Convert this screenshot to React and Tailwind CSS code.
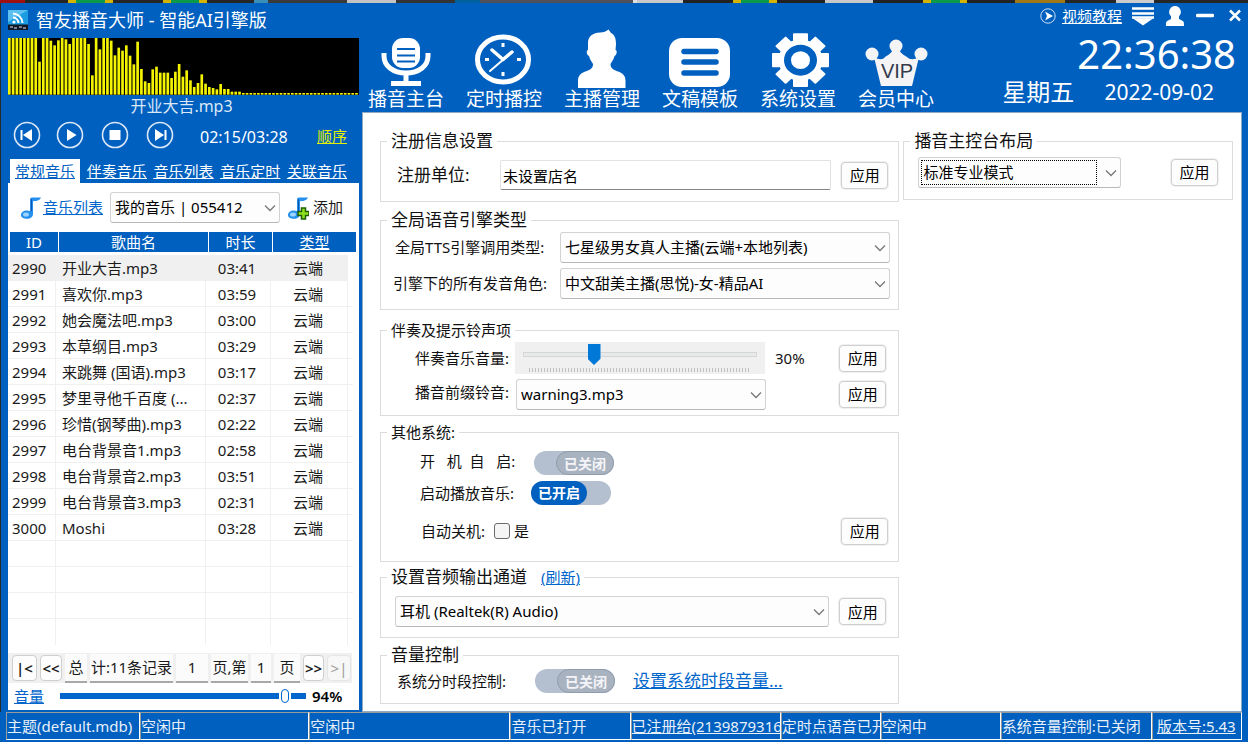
import { useState } from 'react'

// colours of the desktop strip that shows above the window
const strip = [
  [25, '#a01010'], [43, '#262626'], [8, '#d4b400'], [29, '#0a9a4a'], [8, '#d4b400'], [50, '#262626'],
  [8, '#d4b400'], [28, '#0a9a4a'], [8, '#d4b400'], [47, '#262626'], [14, '#3a8fb8'], [79, '#3a3a3a'],
  [49, '#c4c4c4'], [59, '#333333'], [25, '#0060a0'], [153, '#50505a'], [4, '#e0e0e0'], [46, '#c8c8c8'],
  [50, '#222222'], [8, '#d4b400'], [28, '#0a9a4a'], [8, '#d4b400'], [48, '#222222'], [48, '#c8c8c8'],
  [50, '#222222'], [8, '#d4b400'], [29, '#0a9a4a'], [7, '#d4b400'], [48, '#222222'], [50, '#a07818'],
  [51, '#262626'], [38, '#cccccc'], [94, '#262626'],
]

const bars = [
  170, 170, 170, 170, 170, 170, 170, 170, 99, 170, 170, 162, 148, 163, 170, 166, 152, 170, 170, 170,
  170, 152, 58, 170, 136, 170, 170, 162, 118, 141, 132, 148, 117, 91, 159, 77, 40, 35, 76, 84,
  66, 66, 66, 50, 69, 92, 54, 73, 43, 23, 35, 61, 33, 23, 20, 16, 32, 17, 17, 9,
  9, 9, ...Array(31).fill(5),
]

const songs = [
  ['2990', '开业大吉.mp3', '03:41'],
  ['2991', '喜欢你.mp3', '03:59'],
  ['2992', '她会魔法吧.mp3', '03:00'],
  ['2993', '本草纲目.mp3', '03:29'],
  ['2994', '来跳舞 (国语).mp3', '03:17'],
  ['2995', '梦里寻他千百度 (...', '02:37'],
  ['2996', '珍惜(钢琴曲).mp3', '02:22'],
  ['2997', '电台背景音1.mp3', '02:58'],
  ['2998', '电台背景音2.mp3', '03:51'],
  ['2999', '电台背景音3.mp3', '02:31'],
  ['3000', 'Moshi', '03:28'],
]

function Logo() {
  return (
    <svg viewBox="0 0 20 20" className="w-5 h-5 shrink-0">
      <rect width="20" height="20" fill="#1b9be0" />
      <path d="M0 0h20L0 12z" fill="#5cc0f0" />
      <circle cx="6" cy="12" r="1.6" fill="#fff" />
      <path d="M5 7.500a6 6 0 0 1 5.500 5.500M5 3.500a10 10 0 0 1 9.500 9.500" fill="none" stroke="#fff" strokeWidth="2" />
      <rect y="14.500" width="20" height="5.500" fill="#111827" />
      <path d="M2 17h3M6 18h3M11 17h3M15 18h3" stroke="#9ca3af" strokeWidth="1.500" />
    </svg>
  )
}

function Note({ plus }) {
  return (
    <svg viewBox="0 0 22 24" className="w-[22px] h-6 shrink-0">
      <path
        d="M10 3.500C10 2 11 1.500 13 1.500h8c-1 2.500-3 3.500-8 3.700V18c0 3-2.500 4.800-6 4.800S1 21.500 1 19s2.500-4.500 6-4.500c1 0 2 .2 3 .6z"
        fill="#2590ee"
      />
      <ellipse cx="6" cy="18.500" rx="3" ry="2" fill="#9bd4ff" />
      <path d="M11.500 3.200v12" stroke="#0a55b0" strokeWidth="1" />
      {plus && (
        <path d="M14.500 12h4v3.500H22v4h-3.500V23h-4v-3.500H11v-4h3.500z" fill="#8fe01c" stroke="#1e5c06" strokeWidth="1.500" />
      )}
    </svg>
  )
}

function PlayerButton({ label, children }) {
  return (
    <button aria-label={label} className="w-7 h-7">
      <svg viewBox="0 0 28 28" className="w-7 h-7">
        <circle cx="14" cy="14" r="12.500" fill="none" stroke="#dbe8f6" strokeWidth="1.600" />
        <g fill="#fff">{children}</g>
      </svg>
    </button>
  )
}

function Select({ label, value, focus, id, className }) {
  return (
    <div className={`relative ${className}`}>
      <select
        id={id}
        aria-label={label}
        className="block w-full h-[31px] appearance-none rounded-[3px] border border-[#d2d2d2] border-b-[#b8b8b8] bg-[#fdfdfd] pl-1 pr-7 text-[15px] text-black outline-none"
      >
        <option>{value}</option>
      </select>
      {focus && <span className="pointer-events-none absolute top-[3px] bottom-[3px] left-[3px] right-6 border border-dotted border-black" />}
      <svg viewBox="0 0 12 8" className="pointer-events-none absolute right-1 top-3 w-3 h-2">
        <path d="M1 1.500l5 5 5-5" fill="none" stroke="#777" strokeWidth="1.300" />
      </svg>
    </div>
  )
}

function Apply() {
  return (
    <button className="shrink-0 w-[47px] h-[27px] rounded border border-[#cfcfcf] bg-[#fdfdfd] text-[15px] leading-5 text-black ring-1 ring-[#f0f0f0]">
      应用
    </button>
  )
}

function Toggle({ label, defaultOn }) {
  const [on, setOn] = useState(!!defaultOn)
  return (
    <button
      role="switch"
      aria-checked={on}
      aria-label={label}
      onClick={() => setOn(!on)}
      className={`flex h-6 w-20 shrink-0 rounded-full bg-[#b4c0d0] ${on ? 'justify-start' : 'justify-end'}`}
    >
      <span
        className={
          on
            ? 'h-6 w-14 rounded-full bg-[#0060c0] text-center text-[14px] leading-6 font-bold text-white'
            : 'h-6 w-[58px] rounded-full border border-[#8f9cac] bg-[#a9b3c0] text-center text-[14px] leading-6 font-bold text-[#f4f4f8]'
        }
      >
        {on ? '已开启' : '已关闭'}
      </span>
    </button>
  )
}

function Group({ title, small, extra, className, children }) {
  return (
    <fieldset className={`min-w-0 border border-[#dcdcdc] pl-1.5 ${className}`}>
      <legend className={small ? 'px-1 text-[15px] leading-6' : 'px-1 text-[17px] leading-6'}>
        {title}
        {extra}
      </legend>
      {children}
    </fieldset>
  )
}

function Tool({ label, children }) {
  return (
    <button className="flex w-[76px] shrink-0 flex-col items-center whitespace-nowrap text-[19px] leading-5 text-white">
      <svg viewBox="0 0 64 60" className="w-16 h-[60px]">
        {children}
      </svg>
      {label}
    </button>
  )
}

function Toolbar() {
  return (
    <nav className="flex gap-[22px] pl-1.5 pt-[26px]">
      <Tool label="播音主台">
        <rect x="18" y="9" width="28" height="30" rx="11" fill="#fff" />
        <path d="M23 20h18M23 26.500h18M23 32.500h18" stroke="#0060c0" strokeWidth="2" />
        <path d="M10 24v3c0 10 9 17 22 17s22-7 22-17v-3" fill="none" stroke="#fff" strokeWidth="5" />
        <path d="M32 44v9M17 54.500h30" stroke="#fff" strokeWidth="5" />
      </Tool>
      <Tool label="定时播控">
        <ellipse cx="31" cy="30.500" rx="25.500" ry="22.500" fill="none" stroke="#fff" strokeWidth="5" />
        <path d="M31 30.500L20 21M31 30.500L40 23" stroke="#fff" strokeWidth="3.500" strokeLinecap="round" />
        <path d="M32 30L18 42" stroke="#fff" strokeWidth="2" strokeLinecap="round" />
        <path d="M31 14v4M31 43v4M13 30.500h4M45 30.500h4" stroke="#fff" strokeWidth="3" />
      </Tool>
      <Tool label="主播管理">
        <path
          fill="#fff"
          d="M18 14C18 7 23 4 30 3.500c4 0 6-1 8.500-3L41 4c4 2 5 6 5 11l-.5 6c2 0 1.500 5-1 6-1 4-3 6-4 8 0 4 2 5 6 7 7 2 9 5 9 10v7H8v-7c0-5 2-8 9-10 4-2 6-3 6-7-1-2-3-4-4-8-2.500-1-3-6-1-6z"
        />
      </Tool>
      <Tool label="文稿模板">
        <rect x="1" y="9" width="61" height="49" rx="13" fill="#fff" />
        <path d="M16 22.500h32M16 33h32M16 44h32" stroke="#0060c0" strokeWidth="5.500" strokeLinecap="round" />
      </Tool>
      <Tool label="系统设置">
        <g transform="translate(2 2) scale(1 .94)">
          <g fill="#fff">
            {[0, 45, 90, 135].map((a) => (
              <rect key={a} x="25" y="2.500" width="15" height="57" rx="1" transform={`rotate(${a} 32.500 31)`} />
            ))}
            <circle cx="32.500" cy="31" r="22" />
          </g>
          <circle cx="32.500" cy="31" r="13" fill="none" stroke="#0060c0" strokeWidth="7" />
        </g>
      </Tool>
      <Tool label="会员中心">
        <g fill="#f4f4f6">
          <circle cx="32" cy="17" r="6.500" />
          <circle cx="8" cy="25" r="6.500" />
          <circle cx="57" cy="25" r="6.500" />
          <path d="M10 28c5 3 9 3 11 0 3-2 7-4 8-8h6c1 4 5 6 8 8 3 3 7 3 12 0l-7 29H17z" />
        </g>
        <text x="33" y="49" textAnchor="middle" fontSize="20" fill="#333a4a" fontFamily="Liberation Sans">
          VIP
        </text>
      </Tool>
    </nav>
  )
}

function HeaderInfo() {
  return (
    <div className="ml-auto flex flex-col items-end pr-1.5 text-white">
      <div className="mt-px flex h-6 items-center">
        <svg viewBox="0 0 16 16" className="w-4 h-4">
          <circle cx="8" cy="8" r="7.200" fill="none" stroke="#cfe0f4" />
          <path d="M5 3.500L13 8l-8 4.500L7 8z" fill="#fff" />
        </svg>
        <a href="#video" className="ml-1.5 text-[15px] underline">视频教程</a>
        <button aria-label="菜单" className="ml-2.5">
          <svg viewBox="0 0 22 20" className="w-[22px] h-5">
            <path d="M0 2.500h22M0 7.500h22M0 11.500h22" stroke="#fff" strokeWidth="2.500" />
            <path d="M1 12.500h20l-10 7z" fill="#fff" />
          </svg>
        </button>
        <button aria-label="用户" className="ml-3">
          <svg viewBox="0 0 18 20" className="w-[18px] h-5">
            <path d="M9 0a6 6 0 0 1 4 10.300V13l3 1.500c2 1 2 2 2 5.500H0c0-3.500 0-4.500 2-5.500L5 13v-2.700A6 6 0 0 1 9 0z" fill="#fff" />
          </svg>
        </button>
        <button aria-label="最小化" className="ml-3">
          <svg viewBox="0 0 18 20" className="w-[18px] h-5">
            <path d="M1.500 9.500h15" stroke="#fff" strokeWidth="3.500" strokeLinecap="round" />
          </svg>
        </button>
        <button aria-label="关闭" className="ml-3.5">
          <svg viewBox="0 0 14 20" className="w-3.5 h-5">
            <path d="M2 4.500l10 10M12 4.500l-10 10" stroke="#fff" strokeWidth="2.500" />
          </svg>
        </button>
      </div>
      <div className="mt-1 h-11 pr-1.5 text-[40px] leading-11">22:36:38</div>
      <div className="flex h-8 items-center gap-[30px] pr-7">
        <span className="text-2xl leading-8">星期五</span>
        <span className="text-[21px] leading-8">2022-09-02</span>
      </div>
    </div>
  )
}

function Spectrum() {
  return (
    <svg viewBox="0 0 1053 171" preserveAspectRatio="none" className="block w-full h-[57px] bg-black">
      {bars.map((h, i) => (
        <rect key={i} x={i * 11.32} y={170 - h} width="8" height={h} fill="#f4f400" />
      ))}
    </svg>
  )
}

const pagerBtn = 'h-[26px] rounded border border-[#cfcfcf] bg-[#fdfdfd] text-center font-semibold'
const pagerCell = 'h-[29px] border-b-2 border-[#a8a8a8] bg-[#fbfbfb] text-center leading-[26px] whitespace-nowrap'

function Pager() {
  return (
    <div className="mt-2 mr-[7px] flex h-[30px] items-center gap-[3px] bg-[#f0f0f0] pl-1 text-[15px]">
      <button className={`${pagerBtn} w-[25px]`}>|&lt;</button>
      <button className={`${pagerBtn} w-[22px]`}>&lt;&lt;</button>
      <span className={`${pagerCell} w-[22px]`}>总</span>
      <span className={`${pagerCell} w-[83px]`}>计:11条记录</span>
      <span className={`${pagerCell} w-8`}>1</span>
      <span className={`${pagerCell} w-[37px]`}>页,第</span>
      <input aria-label="页码" defaultValue="1" className={`${pagerCell} w-5`} />
      <span className={`${pagerCell} w-[26px]`}>页</span>
      <button className={`${pagerBtn} w-[21px]`}>&gt;&gt;</button>
      <button disabled className="h-[26px] w-6 rounded border border-[#e6e6e6] bg-[#f7f7f7] text-center text-[#9a9a9a]">&gt;|</button>
    </div>
  )
}

function Sidebar() {
  return (
    <aside className="flex w-[361px] shrink-0 flex-col pl-[7px] pr-[3px]">
      <h1 className="flex h-[35px] items-center gap-2 pb-0.5 text-lg text-white">
        <Logo />
        智友播音大师 - 智能AI引擎版
      </h1>
      <Spectrum />
      <div className="h-[22px] pr-1 text-center text-base leading-[22px] text-[#dce8f6]">开业大吉.mp3</div>

      <div className="flex h-9 items-center pl-[5px] text-white">
        <PlayerButton label="上一首"><path d="M7.500 9h2v10h-2zM19 8v12l-9-6z" /></PlayerButton>
        <div className="flex gap-[17px] pl-[15px]">
          <PlayerButton label="播放"><path d="M11 8v12l9.500-6z" /></PlayerButton>
          <PlayerButton label="停止"><path d="M8.500 9h11v10h-11z" /></PlayerButton>
          <PlayerButton label="下一首"><path d="M9 8v12l9-6zM18.500 9h2v10h-2z" /></PlayerButton>
        </div>
        <span className="ml-[26px] pt-1 text-base">02:15/03:28</span>
        <a href="#order" className="ml-auto mr-3 pt-0.5 text-[15px] text-[#e2f000] underline">顺序</a>
      </div>

      <div className="mt-1.5 ml-0.5 mr-3 flex h-6 items-center justify-between text-[15px] text-white underline">
        <a href="#normal" className="h-6 bg-white px-[5px] leading-6 text-[#0060c0]">常规音乐</a>
        <a href="#backing">伴奏音乐</a>
        <a href="#list">音乐列表</a>
        <a href="#timer">音乐定时</a>
        <a href="#linked">关联音乐</a>
      </div>

      <section className="mb-0.5 flex-1 bg-white text-[15px] text-[#1a1a1a]">
        <div className="flex h-[49px] items-center pl-3">
          <Note />
          <a href="#lists" className="ml-px text-[#0066cc] underline">音乐列表</a>
          <Select label="音乐列表" value="我的音乐 | 055412" className="ml-[7px] w-[170px]" />
          <button className="ml-[7px] flex items-center gap-1">
            <Note plus />
            添加
          </button>
        </div>

        <table className="block">
          <thead className="mb-[3px] block pl-0.5 pr-[3px]">
            <tr className="flex h-5 gap-px text-center leading-5 text-white">
              <th className="w-12 bg-[#0060c0] font-normal">ID</th>
              <th className="w-[149px] bg-[#0060c0] font-normal">歌曲名</th>
              <th className="w-[63px] bg-[#0060c0] font-normal">时长</th>
              <th className="flex-1 bg-[#0060c0] font-normal underline">类型</th>
            </tr>
          </thead>
          <tbody className="block pr-1.5">
            {songs.map(([id, name, time], i) => (
              <tr key={id} className={`flex h-[26px] border-b border-[#f0f0f0] leading-[26px] whitespace-nowrap ${i === 0 ? 'mr-[5px] bg-[#f0f0f0]' : ''}`}>
                <td className="w-12 border-r border-[#f0f0f0] pl-1">{id}</td>
                <td className="w-[150px] border-r border-[#f0f0f0] pl-1.5">{name}</td>
                <td className="w-[65px] border-r border-[#f0f0f0] pr-0.5 text-center">{time}</td>
                <td className="w-[77px] border-r border-[#f0f0f0] pr-0.5 text-center">云端</td>
              </tr>
            ))}
            {[1, 2, 3, 4].map((n) => (
              <tr key={n} className="flex h-[26px] border-b border-[#f0f0f0] last:border-b-0">
                <td className="w-12 border-r border-[#f0f0f0]" />
                <td className="w-[150px] border-r border-[#f0f0f0]" />
                <td className="w-[65px] border-r border-[#f0f0f0]" />
                <td className="w-[77px] border-r border-[#f0f0f0]" />
              </tr>
            ))}
          </tbody>
        </table>

        <Pager />

        <div className="flex h-[26px] items-center pl-1.5">
          <label htmlFor="vol" className="text-[#0066cc] underline">音量</label>
          <input
            id="vol"
            type="range"
            defaultValue="93"
            className="mx-4 mr-1.5 h-4 w-[246px] appearance-none bg-transparent [&::-webkit-slider-runnable-track]:h-1.5 [&::-webkit-slider-runnable-track]:bg-[#0066cc] [&::-webkit-slider-thumb]:-mt-1 [&::-webkit-slider-thumb]:h-3.5 [&::-webkit-slider-thumb]:w-2 [&::-webkit-slider-thumb]:appearance-none [&::-webkit-slider-thumb]:rounded-full [&::-webkit-slider-thumb]:border [&::-webkit-slider-thumb]:border-[#0066cc] [&::-webkit-slider-thumb]:bg-white [&::-webkit-slider-thumb]:shadow-[0_0_0_2px_white]"
          />
          <span className="font-semibold text-black">94%</span>
        </div>
      </section>
    </aside>
  )
}

function Settings() {
  return (
    <main className="mr-1.5 grid flex-1 grid-cols-[minmax(0,520fr)_minmax(0,330fr)] gap-1 border border-[#8ea9c8] bg-white pt-4 pl-[17px] pr-2 text-[15px] text-[#111]">
      <div>
        <Group title="注册信息设置" className="pt-[7px] pr-2.5 pb-[11px]">
          <div className="flex h-[30px] items-center">
            <label htmlFor="shop" className="w-[113px] shrink-0 pl-2.5 text-[17px]">注册单位:</label>
            <input
              id="shop"
              defaultValue="未设置店名"
              className="h-[30px] min-w-0 flex-1 rounded-[2px] border border-[#e2e2e2] border-b-[#868686] px-0.5 text-[15px] text-black outline-none"
            />
            <div className="ml-2.5 flex"><Apply /></div>
          </div>
        </Group>

        <Group title="全局语音引擎类型" className="mt-1.5 pr-2 pb-2.5">
          <div className="flex h-[31px] items-center">
            <label htmlFor="tts" className="w-[173px] shrink-0 pl-2">全局TTS引擎调用类型:</label>
            <Select id="tts" value="七星级男女真人主播(云端+本地列表)" className="flex-1" />
          </div>
          <div className="mt-[5px] flex h-[31px] items-center">
            <label htmlFor="voice" className="w-[173px] shrink-0 pl-1.5">引擎下的所有发音角色:</label>
            <Select id="voice" value="中文甜美主播(思悦)-女-精品AI" className="flex-1" />
          </div>
        </Group>

        <Group title="伴奏及提示铃声项" small className="mt-2 pr-3 pb-[5px]">
          <div className="flex h-8 items-center">
            <label htmlFor="bgm" className="w-32 shrink-0 pl-7">伴奏音乐音量:</label>
            <div className="h-8 w-[250px] bg-[#f0f0f0] px-2">
              <input
                id="bgm"
                type="range"
                defaultValue="29"
                className="mt-0.5 block h-[21px] w-full appearance-none bg-transparent [&::-webkit-slider-runnable-track]:h-[5px] [&::-webkit-slider-runnable-track]:border [&::-webkit-slider-runnable-track]:border-[#d6d6d6] [&::-webkit-slider-runnable-track]:bg-[#e7eaea] [&::-webkit-slider-thumb]:-mt-[9px] [&::-webkit-slider-thumb]:h-[21px] [&::-webkit-slider-thumb]:w-[13px] [&::-webkit-slider-thumb]:appearance-none [&::-webkit-slider-thumb]:bg-[#0078d7] [&::-webkit-slider-thumb]:[clip-path:polygon(0_0,100%_0,100%_70%,50%_100%,0_70%)]"
              />
              <div className="mx-1.5 mt-[3px] h-1 bg-[repeating-linear-gradient(90deg,#c0c0c0_0_1px,transparent_1px_3px)]" />
            </div>
            <span className="ml-2.5">30%</span>
            <div className="ml-auto flex"><Apply /></div>
          </div>
          <div className="mt-1 flex h-8 items-center">
            <label htmlFor="bell" className="w-[129px] shrink-0 pb-1 pl-7">播音前缀铃音:</label>
            <Select id="bell" value="warning3.mp3" className="w-[250px]" />
            <div className="ml-auto flex"><Apply /></div>
          </div>
        </Group>

        <Group title="其他系统:" small className="mt-1 pt-[7px] pr-2.5 pb-4">
          <div className="flex h-6 items-center">
            <span className="w-[147px] shrink-0 whitespace-pre pb-1 pl-[33px]">开   机  自   启:</span>
            <Toggle label="开机自启" />
          </div>
          <div className="mt-1.5 flex h-6 items-center">
            <span className="w-36 shrink-0 pl-[33px]">启动播放音乐:</span>
            <Toggle label="启动播放音乐" defaultOn />
          </div>
          <div className="mt-3 flex h-7 items-center">
            <span className="w-[107px] shrink-0 pl-[34px]">自动关机:</span>
            <label className="flex items-center gap-1">
              <input type="checkbox" className="h-4 w-4 appearance-none rounded-[3px] border border-[#6a6a6a] bg-[#f5f5f5] checked:bg-[#0078d7]" />
              是
            </label>
            <div className="ml-auto flex"><Apply /></div>
          </div>
        </Group>

        <Group
          title="设置音频输出通道"
          extra={<a href="#refresh" className="ml-3.5 text-[15px] text-[#0066cc] underline">(刷新)</a>}
          className="mt-[3px] pt-[7px] pr-3 pb-2.5"
        >
          <div className="flex h-[31px] items-center pl-2">
            <Select label="音频输出通道" value="耳机 (Realtek(R) Audio)" className="flex-1" />
            <div className="ml-2.5 flex"><Apply /></div>
          </div>
        </Group>

        <Group title="音量控制" className="mt-[5px] pt-0.5 pb-2.5">
          <div className="flex h-6 items-center">
            <span className="w-[148px] shrink-0 pl-2.5">系统分时段控制:</span>
            <Toggle label="系统分时段控制" />
            <a href="#volume" className="ml-[18px] text-[17px] text-[#0066cc] underline">设置系统时段音量...</a>
          </div>
        </Group>
      </div>

      <div>
        <Group title="播音主控台布局" className="pt-[3px] pr-3.5 pb-[11px]">
          <div className="flex h-8 items-center pl-2">
            <Select label="播音主控台布局" value="标准专业模式" focus className="w-[203px]" />
            <div className="ml-auto flex"><Apply /></div>
          </div>
        </Group>
      </div>
    </main>
  )
}

const cell = 'overflow-hidden border-t border-l border-t-[#9a9a9a] border-l-[#9a9a9a] border-r border-b border-r-white border-b-white'

function StatusBar() {
  return (
    <footer className="mx-1.5 mb-0.5 grid h-7 grid-cols-[134fr_169fr_201fr_120fr_150fr_100fr_120fr_151fr_90fr] text-[15px] leading-[26px] whitespace-nowrap text-[#e8f0fa]">
      <span className={cell}>主题(default.mdb)</span>
      <span className={cell}>空闲中</span>
      <span className={cell}>空闲中</span>
      <span className={cell}>音乐已打开</span>
      <a href="#license" className={`${cell} underline`}>已注册给(2139879316</a>
      <span className={cell}>定时点语音已开</span>
      <span className={cell}>空闲中</span>
      <span className={cell}>系统音量控制:已关闭</span>
      <a href="#version" className={`${cell} pl-1 underline`}>版本号:5.43</a>
    </footer>
  )
}

export default function App() {
  return (
    <div className="flex min-h-screen flex-col bg-[#0060c0] font-['Noto_Sans','Noto_Sans_CJK_SC',sans-serif]">
      {/* DESKTOP BEHIND THE WINDOW */}
      <div className="flex h-[3px]">
        {strip.map(([w, c], i) => (
          <div key={i} style={{ flexGrow: w, background: c }} />
        ))}
      </div>

      <div className="flex flex-1 border-l border-[#2a2a2a]">
        <Sidebar />
        <div className="flex min-w-0 flex-1 flex-col">
          <header className="flex h-[109px]">
            <Toolbar />
            <HeaderInfo />
          </header>
          <Settings />
        </div>
      </div>

      <StatusBar />
    </div>
  )
}
